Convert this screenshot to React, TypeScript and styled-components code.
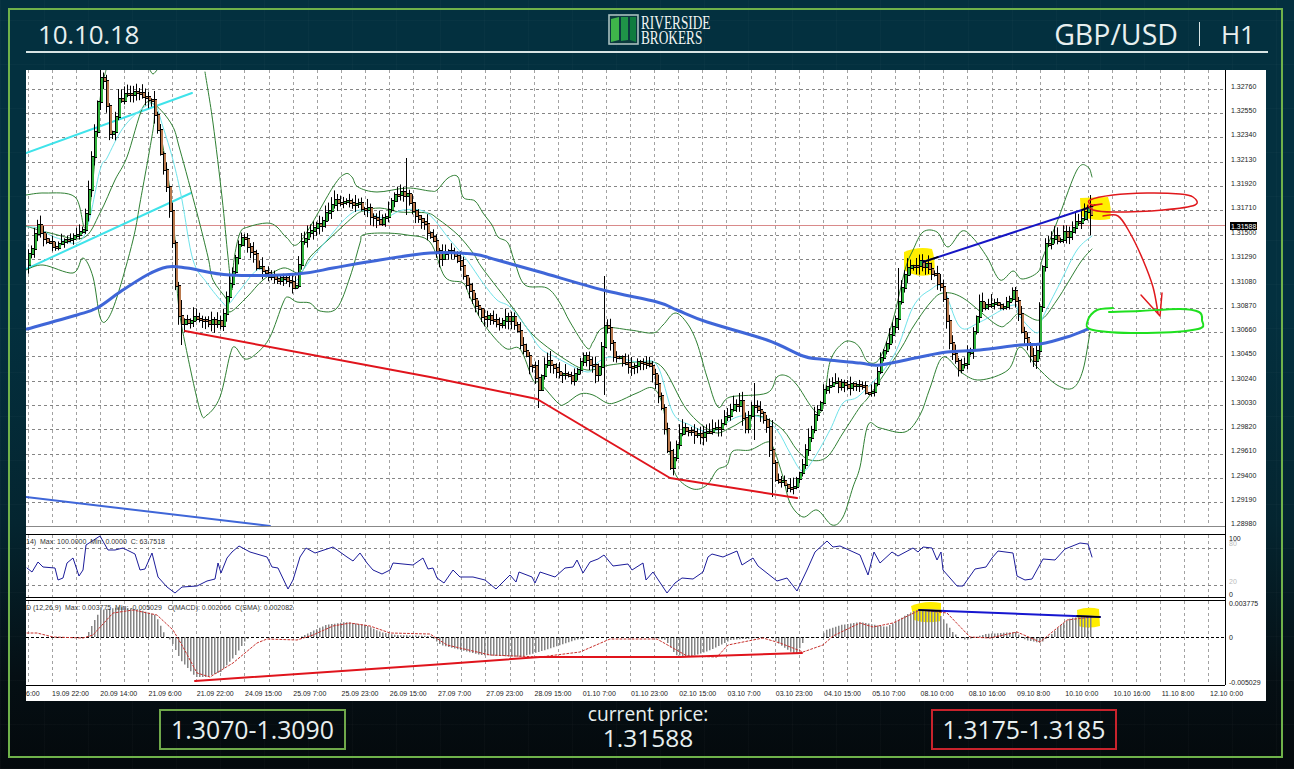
import React from "react"
import styled, { createGlobalStyle } from "styled-components"

type Pt = [number, number]

// all chart data is in page pixels, the svg viewBox lines up with the page
const pricePath: Pt[] = [
  [26, 262], [32, 245], [37, 222], [42, 240], [48, 245], [60, 245], [75, 238], [83, 232], [88, 190], [95, 120],
  [100, 80], [104, 85], [108, 130], [112, 135], [118, 100], [130, 95], [145, 95], [152, 105], [157, 130], [162, 165],
  [167, 190], [172, 240], [176, 300], [180, 325], [190, 320], [205, 320], [220, 325], [226, 300], [232, 270], [240, 235],
  [248, 245], [256, 265], [270, 278], [285, 280], [296, 288], [300, 245], [306, 235], [318, 225], [335, 200], [345, 200],
  [365, 208], [380, 225], [395, 195], [405, 195], [415, 215], [430, 235], [440, 260], [445, 250], [455, 255], [465, 280],
  [480, 315], [500, 322], [512, 315], [520, 345], [535, 375], [537, 395], [545, 360], [555, 370], [570, 380], [585, 355],
  [597, 375], [605, 320], [612, 355], [625, 365], [650, 365], [660, 400], [670, 470], [680, 430], [690, 432], [705, 435],
  [720, 425], [738, 400], [745, 430], [752, 400], [765, 425], [775, 480], [790, 490], [800, 470], [810, 430], [825, 385],
  [840, 385], [860, 385], [870, 395], [880, 360], [895, 320], [905, 270], [918, 262], [930, 270], [942, 290], [948, 340],
  [958, 372], [970, 350], [978, 305], [1005, 305], [1013, 292], [1022, 335], [1035, 365], [1043, 250], [1052, 240],
  [1065, 235], [1080, 220], [1088, 205], [1092, 226],
]

const wickOverrides: Record<number, [number, number]> = {
  100: [70, 110], 181: [300, 345], 405: [158, 215], 537: [360, 408], 604: [276, 395], 754: [383, 440],
  772: [420, 497], 898: [268, 330], 1090: [195, 235],
}

const wideUpper: Pt[][] = [
  [[26, 195], [45, 193], [75, 197], [85, 228], [92, 190], [100, 100], [106, 70]],
  [[150, 70], [153, 74], [157, 70]],
  [
    [205, 72], [213, 123], [222, 197], [228, 257], [232, 290], [234, 260], [240, 233], [248, 227], [267, 223], [277, 227],
    [287, 238], [300, 242], [333, 187], [345, 174], [352, 177], [358, 187], [377, 192], [407, 188], [430, 191], [437, 190],
    [448, 178], [458, 177], [463, 197], [475, 201], [483, 213], [492, 225], [498, 237], [508, 243], [515, 263], [525, 285],
    [547, 288], [560, 303], [570, 322], [587, 348], [593, 342], [603, 328], [630, 330], [653, 333], [663, 325], [675, 313],
    [687, 323], [697, 343], [707, 377], [718, 407], [730, 397], [767, 393], [777, 377], [787, 376], [797, 385], [820, 413],
    [830, 362], [843, 343], [853, 342], [860, 348], [868, 362], [880, 358], [893, 320], [905, 270], [913, 250], [923, 232],
    [937, 232], [948, 247], [962, 231], [973, 238], [987, 257], [1000, 280], [1013, 271], [1022, 279], [1038, 272],
    [1043, 257], [1057, 222], [1077, 170], [1088, 167], [1092, 177],
  ],
]

const wideLower: Pt[] = [
  [26, 270], [43, 265], [73, 273], [83, 258], [93, 277], [100, 317], [107, 320], [117, 297], [133, 240], [140, 203],
  [153, 130], [155, 107], [160, 130], [170, 190], [175, 240], [178, 300], [185, 343], [200, 410], [207, 415], [220, 397],
  [230, 355], [235, 347], [245, 359], [257, 353], [270, 337], [283, 303], [288, 297], [297, 302], [310, 303], [320, 311],
  [337, 308], [350, 277], [360, 243], [363, 235], [383, 233], [407, 235], [430, 242], [445, 277], [463, 283], [470, 297],
  [483, 323], [505, 348], [520, 349], [533, 380], [540, 383], [558, 403], [565, 404], [580, 394], [593, 395], [607, 403],
  [617, 402], [637, 393], [653, 388], [663, 407], [670, 453], [677, 477], [693, 489], [707, 485], [717, 470], [727, 465],
  [733, 451], [750, 450], [767, 442], [773, 447], [783, 477], [790, 503], [803, 517], [817, 510], [832, 525], [843, 517],
  [853, 487], [860, 467], [868, 425], [880, 428], [905, 432], [920, 415], [930, 388], [943, 357], [962, 373], [980, 380],
  [1008, 370], [1020, 347], [1037, 367], [1057, 385], [1073, 388], [1083, 370], [1090, 332],
]

const narrowBand: Pt[] = [
  [26, 226], [50, 233], [83, 238], [100, 213], [115, 180], [127, 157], [143, 107], [155, 105], [172, 125], [180, 150],
  [197, 213], [208, 257], [213, 280], [227, 300], [230, 312], [247, 297], [263, 280], [283, 268], [300, 273], [310, 257],
  [328, 240], [353, 217], [363, 211], [380, 208], [400, 212], [427, 213], [438, 219], [458, 235], [473, 253], [483, 269],
  [513, 308], [533, 335], [563, 358], [587, 370], [610, 365], [643, 362], [663, 368], [687, 410], [713, 432], [730, 428],
  [750, 417], [763, 417], [783, 430], [797, 450], [810, 460], [827, 457], [843, 433], [860, 407], [870, 395], [900, 350],
  [913, 327], [930, 303], [943, 293], [963, 298], [997, 325], [1008, 323], [1020, 313], [1040, 320], [1057, 300],
  [1080, 263], [1092, 249],
]

const cyanAverage: Pt[] = [
  [27, 227], [38, 228], [57, 238], [83, 238], [100, 170], [107, 158], [123, 128], [143, 108], [155, 105], [163, 127],
  [173, 160], [182, 200], [193, 260], [207, 283], [223, 303], [228, 305], [240, 290], [257, 270], [267, 273], [293, 282],
  [303, 270], [312, 258], [327, 240], [347, 217], [362, 210], [383, 218], [403, 210], [427, 213], [450, 240], [467, 260],
  [483, 283], [497, 300], [510, 307], [527, 328], [540, 348], [557, 358], [587, 372], [597, 363], [610, 357], [637, 362],
  [657, 365], [673, 413], [690, 425], [707, 432], [717, 430], [737, 417], [760, 417], [777, 430], [790, 453], [802, 471],
  [813, 460], [830, 430], [843, 403], [860, 395], [893, 357], [913, 307], [930, 290], [943, 288], [960, 327], [980, 322],
  [1013, 305], [1020, 317], [1037, 333], [1043, 317], [1060, 283], [1077, 250], [1092, 236],
]

const blueAverage: Pt[] = [
  [27, 329], [77, 315], [97, 308], [120, 292], [147, 275], [167, 267], [187, 268], [230, 275], [297, 274], [333, 268],
  [367, 262], [430, 253], [473, 254], [497, 260], [540, 272], [603, 290], [657, 302], [677, 310], [707, 322], [767, 340],
  [803, 356], [820, 359], [860, 363], [880, 365], [920, 357], [947, 352], [980, 350], [1020, 345], [1040, 344],
  [1067, 337], [1088, 329],
]

const rsiLine: Pt[] = [
  [27, 568], [32, 572], [38, 562], [43, 567], [55, 568], [58, 580], [63, 578], [67, 563], [73, 558], [79, 576], [83, 570],
  [86, 545], [100, 536], [108, 550], [115, 550], [123, 548], [135, 554], [140, 570], [145, 569], [152, 553], [158, 577],
  [167, 587], [175, 593], [182, 587], [197, 586], [207, 581], [215, 579], [218, 563], [221, 573], [227, 558], [232, 552],
  [239, 546], [250, 552], [267, 557], [272, 567], [278, 568], [288, 589], [293, 580], [300, 557], [306, 548], [315, 553],
  [333, 547], [347, 557], [353, 561], [360, 553], [367, 563], [373, 570], [382, 574], [390, 570], [393, 563], [413, 565],
  [423, 558], [428, 569], [433, 568], [437, 578], [444, 583], [453, 570], [460, 577], [473, 577], [485, 580], [496, 589],
  [510, 575], [516, 582], [519, 572], [532, 577], [535, 583], [540, 572], [555, 577], [565, 568], [573, 567], [577, 560],
  [583, 573], [590, 562], [598, 559], [604, 555], [613, 566], [628, 564], [632, 570], [643, 563], [646, 580], [653, 572],
  [667, 593], [675, 583], [682, 578], [693, 579], [703, 572], [708, 557], [712, 554], [723, 557], [737, 551], [742, 565],
  [753, 558], [758, 566], [777, 581], [787, 578], [797, 591], [807, 570], [815, 552], [827, 541], [833, 547], [840, 546],
  [860, 555], [868, 575], [874, 552], [880, 563], [892, 552], [898, 556], [913, 548], [918, 552], [923, 547], [932, 548],
  [937, 560], [941, 552], [943, 570], [957, 586], [963, 586], [975, 569], [986, 567], [992, 558], [998, 551], [1013, 553],
  [1017, 576], [1025, 580], [1032, 579], [1043, 559], [1055, 560], [1065, 549], [1080, 543], [1088, 544], [1092, 557],
]

const macdBars: Pt[] = [
  [28, 637], [85, 637], [88, 632], [95, 618], [100, 610], [120, 607], [140, 610], [155, 615], [162, 630], [165, 637], [170, 640],
  [180, 660], [195, 677], [205, 677], [220, 672], [235, 655], [245, 640], [250, 637], [300, 637], [310, 632], [325, 625],
  [345, 622], [365, 625], [380, 632], [395, 635], [430, 636], [440, 645], [480, 655], [520, 657], [545, 650], [575, 640],
  [590, 637], [650, 637], [665, 640], [675, 655], [690, 657], [710, 650], [730, 640], [770, 637], [780, 645], [795, 655],
  [805, 638], [820, 637], [825, 630], [840, 625], [860, 622], [885, 627], [895, 622], [905, 615], [915, 610], [935, 610],
  [945, 622], [952, 632], [958, 637], [965, 640], [975, 637], [985, 634], [1015, 632], [1025, 640], [1040, 643], [1050, 635],
  [1060, 625], [1070, 618], [1091, 616],
]

const macdSignal: Pt[] = [
  [27, 633], [37, 633], [53, 637], [83, 638], [93, 635], [113, 613], [133, 610], [157, 615], [173, 630], [183, 647], [197, 673],
  [210, 677], [233, 663], [257, 643], [267, 639], [297, 640], [313, 635], [333, 626], [350, 623], [370, 626], [390, 633],
  [430, 634], [447, 645], [490, 655], [540, 657], [580, 652], [610, 639], [657, 639], [687, 656], [717, 657], [728, 645],
  [763, 638], [780, 643], [803, 652], [823, 645], [833, 636], [860, 623], [873, 627], [893, 623], [920, 610], [947, 613],
  [970, 637], [990, 638], [1017, 632], [1040, 642], [1067, 620], [1092, 617],
]

const priceLabels: [string, number][] = [
  ["1.32760", 86], ["1.32550", 110], ["1.32340", 134], ["1.32130", 159], ["1.31920", 183], ["1.31710", 207], ["1.31500", 232],
  ["1.31290", 256], ["1.31080", 281], ["1.30870", 305], ["1.30660", 329], ["1.30450", 353], ["1.30240", 378], ["1.30030", 402],
  ["1.29820", 426], ["1.29610", 450], ["1.29400", 475], ["1.29190", 499], ["1.28980", 523],
]

const timeLabels = [
  "19.09 22:00", "20.09 14:00", "21.09 6:00", "21.09 22:00", "24.09 15:00", "25.09 7:00", "25.09 23:00", "26.09 15:00",
  "27.09 7:00", "27.09 23:00", "28.09 15:00", "01.10 7:00", "01.10 23:00", "02.10 15:00", "03.10 7:00", "03.10 23:00",
  "04.10 15:00", "05.10 7:00", "08.10 0:00", "08.10 16:00", "09.10 8:00", "10.10 0:00", "10.10 16:00", "11.10 8:00", "12.10 0:00",
]

const points = (line: Pt[]) => line.map(p => p.join(",")).join(" ")

// catmull-rom through the points, for the curves that are not jagged
const smoothPath = (line: Pt[]) => {
  let d = `M${line[0][0]} ${line[0][1]}`
  for (let i = 0; i < line.length - 1; i++) {
    const p0 = line[i - 1] || line[i]
    const p1 = line[i]
    const p2 = line[i + 1]
    const p3 = line[i + 2] || p2
    const c1x = p1[0] + (p2[0] - p0[0]) / 6
    const c1y = p1[1] + (p2[1] - p0[1]) / 6
    const c2x = p2[0] - (p3[0] - p1[0]) / 6
    const c2y = p2[1] - (p3[1] - p1[1]) / 6
    d += ` C${c1x.toFixed(1)} ${c1y.toFixed(1)} ${c2x.toFixed(1)} ${c2y.toFixed(1)} ${p2[0]} ${p2[1]}`
  }
  return d
}

const valueAt = (line: Pt[], x: number) => {
  for (let i = 1; i < line.length; i++) {
    if (x <= line[i][0]) {
      const [x0, y0] = line[i - 1]
      const [x1, y1] = line[i]
      return y0 + ((y1 - y0) * (x - x0)) / (x1 - x0 || 1)
    }
  }
  return line[line.length - 1][1]
}

const noise = (seed: number) => {
  const s = Math.sin(seed * 12.9898) * 43758.5453
  return s - Math.floor(s)
}

const barXs: number[] = []
for (let x = 28; x <= 1091; x += 3) barXs.push(x)

const Candles = () => {
  let prev = valueAt(pricePath, 25)
  return (
    <g>
      {barXs.map(x => {
        const close = Math.round(valueAt(pricePath, x) + (noise(x) - 0.5) * 7)
        const open = prev
        prev = close
        const top = Math.min(open, close)
        const bottom = Math.max(open, close)
        const override = wickOverrides[x - 1] || wickOverrides[x] || wickOverrides[x + 1]
        const high = override ? override[0] : top - 1 - noise(x + 1) * 9
        const low = override ? override[1] : bottom + 1 + noise(x + 2) * 8
        return (
          <g key={x}>
            <line x1={x + 0.5} x2={x + 0.5} y1={high} y2={low} stroke="#000" strokeWidth={1} />
            <rect x={x} y={top - 1} width={3} height={Math.max(bottom - top, 1) + 2} fill="#000" />
            <rect
              x={x + 1}
              y={top}
              width={2}
              height={Math.max(bottom - top, 1)}
              fill={close < open ? "#2fb03a" : "#b9794d"}
            />
          </g>
        )
      })}
    </g>
  )
}

type TrendLineProps = { line: Pt[]; color: string; width?: number; dash?: string; smooth?: boolean }

const TrendLine = ({ line, color, width = 1, dash, smooth }: TrendLineProps) =>
  smooth ? (
    <path d={smoothPath(line)} fill="none" stroke={color} strokeWidth={width} strokeLinecap="round" />
  ) : (
    <polyline
      points={points(line)}
      fill="none"
      stroke={color}
      strokeWidth={width}
      strokeDasharray={dash}
      strokeLinejoin="round"
      strokeLinecap="round"
    />
  )

const gridXs = Array.from({ length: 50 }, (_, k) => Math.floor(28 + 24.1 * k) + 0.5)
const gridYs = Array.from({ length: 18 }, (_, k) => Math.floor(89 + 24.35 * k) + 0.5)

const Chart = () => (
  <ChartSvg viewBox="26 70 1240 631" width={1240} height={631}>
    <rect x={26} y={70} width={1240} height={631} fill="#fff" />

    <g stroke="#a2a2a2" strokeWidth={1} strokeDasharray="3 3">
      {gridXs.map(x => (
        <g key={x}>
          <line x1={x} x2={x} y1={70} y2={526} />
          <line x1={x} x2={x} y1={535} y2={597} />
          <line x1={x} x2={x} y1={601} y2={685} />
        </g>
      ))}
    </g>
    <g stroke="#858585" strokeWidth={1} strokeDasharray="3 3">
      {gridYs.map(y => (
        <line key={y} x1={26} x2={1225} y1={y} y2={y} />
      ))}
      <line x1={26} x2={1225} y1={548.5} y2={548.5} />
      <line x1={26} x2={1225} y1={585.5} y2={585.5} />
    </g>

    <line x1={26} x2={1225} y1={225.5} y2={225.5} stroke="#d98a8a" strokeWidth={1} />

    <path d="M904 252 Q918 246 932 249 Q936 262 934 274 Q918 279 904 270 Z" fill="#ffee00" />
    <path d="M1080 198 L1108 197 Q1112 208 1110 219 Q1094 222 1081 216 Z" fill="#ffee00" />

    <TrendLine line={[[26, 153], [192, 93]]} color="#3fe3ea" width={2} />
    <TrendLine line={[[26, 269], [191, 193]]} color="#3fe3ea" width={2} />

    {wideUpper.map((seg, i) => (
      <TrendLine key={i} line={seg} color="#2f7f33" smooth />
    ))}
    <TrendLine line={wideLower} color="#2f7f33" smooth />
    <TrendLine line={narrowBand} color="#2f7f33" smooth />
    <TrendLine line={cyanAverage} color="#6fe3ea" smooth />

    <Candles />

    <TrendLine line={blueAverage} color="#3f66d8" width={3} smooth />
    <TrendLine line={[[26, 497], [270, 526]]} color="#3f66d8" width={2} />
    <TrendLine line={[[185, 331], [430, 377], [537, 399], [670, 478], [797, 498]]} color="#e0141c" width={2} />
    <TrendLine line={[[923, 262], [1088, 208]]} color="#1616c4" width={2} />
    <TrendLine line={[[923, 262], [938, 257]]} color="#000" width={1.5} />
    <TrendLine line={[[1082, 210], [1095, 205]]} color="#000" width={1.5} />

    <TrendLine
      line={[
        [1102, 204], [1092, 205], [1090, 200], [1113, 195], [1147, 193], [1180, 194], [1193, 197], [1195, 205], [1163, 210],
        [1113, 212], [1093, 210], [1088, 205],
      ]}
      color="#e0181c"
      width={1.5}
      smooth
    />
    <TrendLine
      line={[[1103, 216], [1118, 216], [1130, 233], [1143, 260], [1153, 287], [1158, 313]]}
      color="#e0181c"
      width={1.5}
      smooth
    />
    <TrendLine line={[[1141, 295], [1160, 316], [1162, 293]]} color="#e0181c" width={1.5} />
    <TrendLine
      line={[
        [1113, 308], [1097, 310], [1088, 320], [1093, 330], [1147, 333], [1198, 329], [1202, 320], [1199, 312], [1180, 309],
        [1140, 311], [1109, 312],
      ]}
      color="#1fe01f"
      width={2}
      smooth
    />

    <line x1={26} x2={1225} y1={526.5} y2={526.5} stroke="#888" />
    <line x1={1225.5} x2={1225.5} y1={70} y2={685} stroke="#000" />
    <line x1={26} x2={1225} y1={534.5} y2={534.5} stroke="#000" />
    <line x1={26} x2={1225} y1={597.5} y2={597.5} stroke="#000" />
    <line x1={26} x2={1225} y1={600.5} y2={600.5} stroke="#000" />
    <line x1={26} x2={1225} y1={685.5} y2={685.5} stroke="#000" />

    {priceLabels.map(([label, y]) => (
      <AxisText key={label} x={1231} y={y + 2.5}>
        {label}
      </AxisText>
    ))}
    <rect x={1230} y={222} width={27} height={8} fill="#000" />
    <AxisText x={1231} y={228.5} $tone="#fff">
      1.31588
    </AxisText>

    <TrendLine line={rsiLine} color="#1c1c9a" />
    <PaneText x={26} y={544}>
      14) &nbsp;Max: 100.0000 &nbsp;Min: 0.0000 &nbsp;C: 63.7518
    </PaneText>
    <AxisText x={1229} y={546} $tone="#bbb">80</AxisText>
    <AxisText x={1229} y={541}>100</AxisText>
    <AxisText x={1229} y={584} $tone="#bbb">20</AxisText>
    <AxisText x={1229} y={597}>0</AxisText>

    <path d="M911 606 Q925 600 941 603 L941 621 Q925 624 914 620 Z" fill="#ffee00" />
    <path d="M1077 610 Q1088 606 1099 609 L1100 626 Q1088 629 1078 626 Z" fill="#ffee00" />
    <g stroke="#858585" strokeWidth={1.5}>
      {barXs.map(x => (
        <line key={x} x1={x + 0.75} x2={x + 0.75} y1={637} y2={valueAt(macdBars, x)} />
      ))}
    </g>
    <line x1={26} x2={1225} y1={637.5} y2={637.5} stroke="#000" strokeDasharray="3 2" />
    <TrendLine line={macdSignal} color="#c8322e" dash="2 2" />
    <TrendLine line={[[195, 681], [430, 665], [540, 657], [680, 657], [802, 653]]} color="#e0141c" width={2} />
    <TrendLine line={[[919, 610], [1100, 617]]} color="#1616d0" width={2} />
    <TrendLine line={[[919, 610], [941, 611]]} color="#000" width={1.5} />
    <TrendLine line={[[1077, 616], [1100, 617]]} color="#000" width={1.5} />
    <PaneText x={26} y={610}>
      D (12,26,9) &nbsp;Max: 0.003775 &nbsp;Min: -0.005029 &nbsp;&nbsp;C(MACD): 0.002066 &nbsp;C(SMA): 0.002082
    </PaneText>
    <AxisText x={1229} y={606}>0.003775</AxisText>
    <AxisText x={1229} y={640}>0</AxisText>
    <AxisText x={1229} y={685}>-0.005029</AxisText>

    <AxisText x={26} y={696}>6:00</AxisText>
    {timeLabels.map((label, k) => (
      <AxisText key={label} x={52 + 48.25 * k} y={696}>
        {label}
      </AxisText>
    ))}
  </ChartSvg>
)

const LogoMark = () => (
  <svg width={31} height={31} viewBox="0 0 31 31">
    <rect x={1} y={1} width={29} height={29} fill="#0b3a3f" stroke="#a9c0bf" strokeWidth={1.6} />
    <polygon points="3,5 11,3 11,26 3,28" fill="#3fb54a" />
    <polygon points="13,3 20,3 20,26 13,27" fill="#1f9448" />
    <polygon points="22,3 28,3 28,28 22,26" fill="#0f7c3f" />
  </svg>
)

const App = () => (
  <Page>
    <GlobalStyle />
    <Frame>
      <Header>
        <DateText>10.10.18</DateText>
        <Logo>
          <LogoMark />
          <Wordmark>
            <span>RIVERSIDE</span>
            <span>BROKERS</span>
          </Wordmark>
        </Logo>
        <Pair>
          <PairName>GBP/USD</PairName>
          <PairDivider />
          <span>H1</span>
        </Pair>
      </Header>
      <Chart />
      <Footer>
        <PriceBox $tone="#6fa84a">1.3070-1.3090</PriceBox>
        <Current>
          <CurrentLabel>current price:</CurrentLabel>
          <CurrentValue>1.31588</CurrentValue>
        </Current>
        <PriceBox $tone="#c8232c" $right>
          1.3175-1.3185
        </PriceBox>
      </Footer>
    </Frame>
  </Page>
)

const GlobalStyle = createGlobalStyle`
  html, body {
    margin: 0;
    padding: 0;
    background: #04090c;
  }
`

const Page = styled.div`
  width: 1294px;
  height: 769px;
  box-sizing: border-box;
  padding: 8px 11px 11px 8px;
  font-family: "Open Sans", "Liberation Sans", sans-serif;
  color: #e8efef;
  background:
    repeating-linear-gradient(90deg, rgba(255, 255, 255, 0.018) 0 1px, transparent 1px 44px),
    repeating-linear-gradient(0deg, rgba(255, 255, 255, 0.018) 0 1px, transparent 1px 44px),
    linear-gradient(180deg, #03303f 0%, #03303f 40%, #042530 68%, #050f14 88%, #04090c 100%);
  overflow: hidden;
`

const Frame = styled.div`
  box-sizing: border-box;
  height: 750px;
  width: 1275px;
  border: 2px solid #6fb24a;
  padding: 0 13px 0 16px;
  display: flex;
  flex-direction: column;
`

const Header = styled.header`
  position: relative;
  height: 43px;
  width: 1242px;
  box-sizing: border-box;
  margin-bottom: 17px;
  padding: 6px 13px 0 12px;
  border-bottom: 2px solid #d8e4e4;
  display: flex;
  align-items: center;
  justify-content: space-between;
  font-size: 26px;
`

const DateText = styled.div`
  letter-spacing: -0.2px;
`

const Logo = styled.div`
  position: absolute;
  left: 582px;
  top: 4px;
  display: flex;
  align-items: center;
  gap: 2px;
`

const Wordmark = styled.div`
  display: flex;
  flex-direction: column;
  width: 70px;
  font-family: "Liberation Serif", serif;
  font-size: 19px;
  line-height: 15px;
  color: #f0f5f2;
  transform: scaleX(0.7);
  transform-origin: left center;
  white-space: nowrap;
`

const Pair = styled.div`
  display: flex;
  align-items: center;
  gap: 21px;
`

const PairName = styled.span`
  font-size: 28.5px;
`

const PairDivider = styled.span`
  width: 1px;
  height: 24px;
  background: #d8e4e4;
`

const ChartSvg = styled.svg`
  display: block;
  flex: none;
`

const AxisText = styled.text<{ $tone?: string }>`
  font-family: "Liberation Sans", sans-serif;
  font-size: 7px;
  fill: ${p => p.$tone || "#222"};
`

const PaneText = styled.text`
  font-family: "Liberation Sans", sans-serif;
  font-size: 7px;
  fill: #333;
`

const Footer = styled.footer`
  width: 1240px;
  flex: 1;
  display: grid;
  grid-template-columns: 1fr auto 1fr;
  align-items: center;
`

const PriceBox = styled.div<{ $tone: string; $right?: boolean }>`
  box-sizing: border-box;
  width: ${p => (p.$right ? 186 : 187)}px;
  height: 41px;
  margin-top: 2px;
  justify-self: ${p => (p.$right ? "end" : "start")};
  margin-left: ${p => (p.$right ? 0 : 133)}px;
  margin-right: ${p => (p.$right ? 149 : 0)}px;
  border: 2px solid ${p => p.$tone};
  display: flex;
  align-items: center;
  justify-content: center;
  font-size: 24.8px;
  line-height: 1;
`

const Current = styled.div`
  display: flex;
  flex-direction: column;
  align-items: center;
  margin-left: 4px;
  margin-top: -3px;
`

const CurrentLabel = styled.div`
  font-size: 19.2px;
  line-height: 22px;
`

const CurrentValue = styled.div`
  font-size: 24.5px;
  line-height: 26px;
`

export default App
